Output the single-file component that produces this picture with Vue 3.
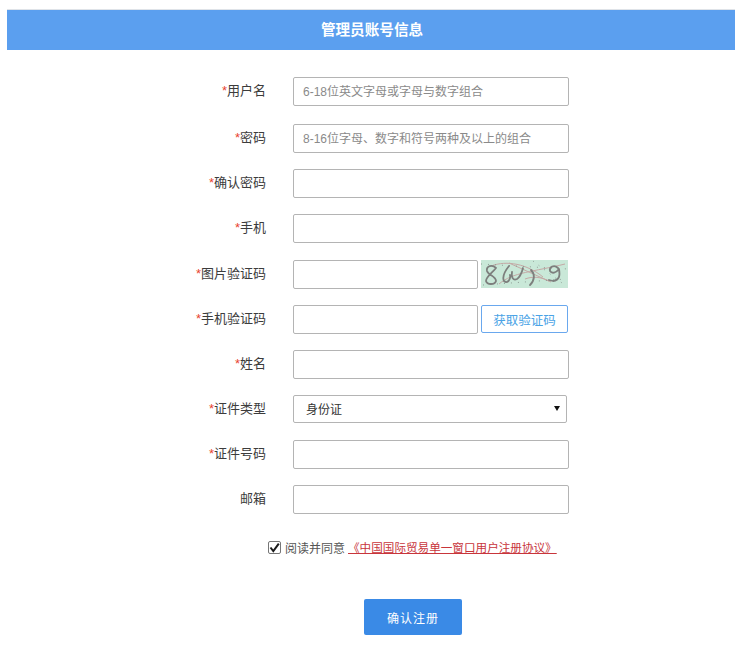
<script setup>
const rows = [
  { label: '用户名', req: true, ph: '6-18位英文字母或字母与数字组合', h: 47 },
  { label: '密码', req: true, ph: '8-16位字母、数字和符号两种及以上的组合', h: 45 },
  { label: '确认密码', req: true, h: 45 },
  { label: '手机', req: true, h: 46 },
  { label: '图片验证码', req: true, kind: 'captcha', h: 45 },
  { label: '手机验证码', req: true, kind: 'sms', h: 45 },
  { label: '姓名', req: true, h: 45 },
  { label: '证件类型', req: true, kind: 'select', h: 45 },
  { label: '证件号码', req: true, h: 45 },
  { label: '邮箱', req: false, h: 45 }
]
</script>

<template>
  <div class="page">
    <div class="title">管理员账号信息</div>
    <form class="form" @submit.prevent>
      <div
        v-for="row in rows"
        :key="row.label"
        class="row"
        :style="{ height: row.h + 'px' }"
      >
        <label class="label"><span v-if="row.req" class="star">*</span>{{ row.label }}</label>
        <div v-if="row.kind === 'select'" class="select-wrap">
          <select class="field select">
            <option>身份证</option>
          </select>
          <span class="caret"></span>
        </div>
        <div v-else-if="row.kind === 'captcha'" class="pair">
          <input class="field short" />
          <svg class="captcha" width="87" height="28" viewBox="0 0 87 28">
            <rect width="87" height="28" fill="#c9e8d8" />
            <g fill="none" stroke="#c4a9a6" stroke-width="1">
              <path d="M10 6C26 0 46 4 62 17" />
              <path d="M18 24C32 12 52 12 84 4" />
              <path d="M28 3 70 22" />
              <path d="M44 19C52 16 60 17 68 21" />
            </g>
            <g fill="none" stroke="#7f8a84" stroke-width="0.8" stroke-dasharray="1 6">
              <path d="M0 4 87 9" />
              <path d="M2 25 85 19" />
              <path d="M52 1 85 26" />
            </g>
            <g fill="none" stroke="#7d7f7d" stroke-width="1.8" stroke-linecap="round" stroke-linejoin="round">
              <path d="M15 8C11 4 5 6 6 11C7 15 15 16 15 21C14 25 6 25 5 21C5 17 11 13 15 8Z" />
              <path d="M28 6C24 11 21 17 23 21C26 24 30 20 29 15" />
              <path d="M31 12C30 17 32 21 36 19C39 17 41 12 42 8" />
              <path d="M50 10C54 14 54 20 49 25" />
              <path d="M77 8C73 4 68 7 69 11C71 14 75 13 78 9C79 15 79 20 72 21L68 20" />
            </g>
          </svg>
        </div>
        <div v-else-if="row.kind === 'sms'" class="pair">
          <input class="field short" />
          <button type="button" class="sms">获取验证码</button>
        </div>
        <input v-else class="field" :placeholder="row.ph" />
      </div>

      <div class="agree">
        <span class="check-wrap">
          <input type="checkbox" class="check" checked />
          <svg class="tick" width="13" height="13" viewBox="0 0 13 13">
            <path d="M2.5 6.5 5.3 10 10.8 2.6" fill="none" stroke="#1a1a1a" stroke-width="2" />
          </svg>
        </span>
        <span class="agree-text">阅读并同意</span>
        <a class="link">《中国国际贸易单一窗口用户注册协议》</a>
      </div>

      <button type="button" class="submit">确认注册</button>
    </form>
  </div>
</template>

<style scoped>
.page {
  width: 746px;
  height: 648px;
  box-sizing: border-box;
  padding: 9px 11px 0 7px;
  background: #fff;
  font-family: "Liberation Sans", "Noto Sans CJK SC", sans-serif;
  overflow: hidden;
}
.title {
  height: 41px;
  line-height: 40px;
  box-sizing: border-box;
  border-top: 1px solid #dfe3e8;
  padding-left: 2px;
  text-align: center;
  background: #5b9fef;
  color: #fff;
  font-size: 14.6px;
  font-weight: 700;
}
.form {
  padding-top: 27px;
}
.row {
  display: flex;
  align-items: flex-start;
}
.label {
  width: 259px;
  line-height: 27px;
  text-align: right;
  font-size: 13px;
  color: #3c3c3c;
}
.star {
  color: #e8432e;
}
.field {
  box-sizing: border-box;
  width: 276px;
  height: 29px;
  margin-left: 27px;
  padding: 0 9px;
  border: 1px solid #b4b4b4;
  border-radius: 2px;
  background: #fff;
  font-family: inherit;
  font-size: 12px;
  color: #333;
  outline: none;
}
.field::placeholder {
  color: #8a8a8a;
}
.select-wrap {
  position: relative;
  margin-left: 27px;
}
.select {
  display: block;
  width: 274px;
  height: 28px;
  margin-left: 0;
  padding: 2px 0 0 12px;
  appearance: none;
}
.caret {
  position: absolute;
  top: 11px;
  right: 7px;
  border-style: solid;
  border-width: 5px 3.5px 0;
  border-color: #111 transparent transparent;
  pointer-events: none;
}
.pair {
  display: flex;
  align-items: flex-start;
  margin-left: 27px;
}
.short {
  width: 185px;
  margin-left: 0;
}
.captcha {
  display: block;
  width: 87px;
  height: 28px;
  margin-left: 3px;
}
.sms {
  box-sizing: border-box;
  width: 87px;
  height: 28px;
  margin-left: 3px;
  border: 1px solid #6aa8ee;
  border-radius: 2px;
  background: #fff;
  color: #4aa3e6;
  font-family: inherit;
  font-size: 12.5px;
  padding: 0;
}
.agree {
  display: flex;
  align-items: center;
  height: 20px;
  margin: 7px 0 0 261px;
  font-size: 12px;
}
.check-wrap {
  position: relative;
  width: 13px;
  height: 13px;
  margin-right: 4px;
}
.check {
  display: block;
  box-sizing: border-box;
  width: 13px;
  height: 13px;
  margin: 0;
  appearance: none;
  border: 1px solid #767676;
  border-radius: 2px;
  background: #fff;
}
.tick {
  position: absolute;
  top: 0;
  left: 0;
  pointer-events: none;
}
.agree-text {
  color: #555;
}
.link {
  margin-left: 3px;
  font-size: 11.6px;
  color: #c8353b;
  text-decoration: underline;
}
.submit {
  display: block;
  width: 98px;
  height: 36px;
  margin: 42px 0 0 357px;
  border: 0;
  border-radius: 2px;
  background: #3a8ae6;
  color: #fff;
  font-family: inherit;
  font-size: 12px;
  letter-spacing: 1px;
  padding: 0;
}
</style>
